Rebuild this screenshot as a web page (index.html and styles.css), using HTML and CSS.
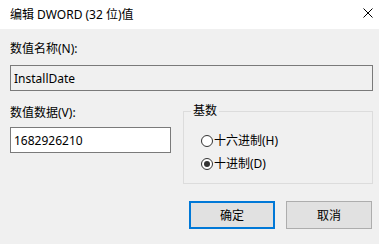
FILE: index.html
```html
<!DOCTYPE html>
<html lang="zh-CN">
<head>
<meta charset="utf-8">
<title>编辑 DWORD (32 位)值</title>
<link rel="stylesheet" href="styles.css">
</head>
<body>
<div class="dialog">
  <div class="titlebar">
    <span class="title">编辑 DWORD (32 位)值</span>
    <span class="close">
      <svg width="10" height="10" viewBox="0 0 10 10"><path d="M0.5 0.5 L9.5 9.5 M9.5 0.5 L0.5 9.5" stroke="#000" stroke-width="1" fill="none"/></svg>
    </span>
  </div>
  <div class="content">
    <div class="label">数值名称(N):</div>
    <input class="field field-readonly" type="text" value="InstallDate" readonly>
    <div class="row">
      <div class="col-left">
        <div class="label">数值数据(V):</div>
        <input class="field field-data" type="text" value="1682926210">
      </div>
      <fieldset class="group">
        <legend class="legend">基数</legend>
        <div class="radio-row"><span class="radio"></span><span class="radio-text">十六进制(H)</span></div>
        <div class="radio-row"><span class="radio checked"></span><span class="radio-text">十进制(D)</span></div>
      </fieldset>
    </div>
    <div class="buttons">
      <button class="btn btn-default">确定</button>
      <button class="btn">取消</button>
    </div>
  </div>
</div>
</body>
</html>
```

FILE: styles.css
```css
html, body {
  margin: 0;
  padding: 0;
  background: #f0f0f0;
}
body {
  width: 379px;
  height: 244px;
  overflow: hidden;
  font-family: "Noto Sans", "Noto Sans CJK SC", sans-serif;
  font-size: 12px;
  line-height: 16px;
  color: #000;
}
.dialog {
  width: 379px;
  height: 244px;
  display: flex;
  flex-direction: column;
}
.titlebar {
  height: 29px;
  background: #fff;
  display: flex;
  align-items: center;
  justify-content: space-between;
  padding-left: 10px;
  padding-right: 6px;
  box-sizing: border-box;
}
.title {
  line-height: 16px;
}
.close {
  display: flex;
  width: 10px;
  height: 10px;
  margin-top: -3px;
}
.content {
  padding: 12px 6px 0 10px;
  display: flex;
  flex-direction: column;
}
.label {
  line-height: 16px;
  height: 16px;
}
.field {
  display: block;
  box-sizing: border-box;
  height: 26px;
  margin: 8px 0 0 0;
  padding: 0 3px;
  border: 1px solid #7a7a7a;
  font-family: "Noto Sans", "Noto Sans CJK SC", sans-serif;
  font-size: 12px;
  color: #000;
  outline: none;
}
.field-readonly {
  width: 363px;
  background: #f0f0f0;
}
.field-data {
  width: 161px;
  margin-top: 6px;
  background: #fff;
}
.row {
  display: flex;
  align-items: flex-start;
  margin-top: 14px;
}
.col-left {
  width: 161px;
  display: flex;
  flex-direction: column;
}
.group {
  box-sizing: border-box;
  width: 190px;
  margin: -1px 0 0 12px;
  padding: 11px 0 8px 0;
  border: 1px solid #dcdcdc;
  min-width: 0;
}
.legend {
  margin-left: 7px;
  padding: 0 2px;
  line-height: 14px;
}
.radio-row {
  display: flex;
  align-items: center;
  height: 23px;
  padding-left: 17px;
}
.radio {
  box-sizing: border-box;
  width: 12px;
  height: 12px;
  border: 1px solid #333;
  border-radius: 50%;
  background: #fff;
  display: flex;
  align-items: center;
  justify-content: center;
}
.radio.checked::after {
  content: "";
  width: 6px;
  height: 6px;
  border-radius: 50%;
  background: #333;
}
.radio-text {
  margin-left: 1px;
}
.buttons {
  display: flex;
  justify-content: flex-end;
  gap: 11px;
  margin-top: 17px;
  padding-right: 1px;
}
.btn {
  box-sizing: border-box;
  width: 86px;
  height: 28px;
  background: #e1e1e1;
  border: 1px solid #adadad;
  font-family: "Noto Sans", "Noto Sans CJK SC", sans-serif;
  font-size: 12px;
  color: #000;
  padding: 0;
}
.btn-default {
  border: 2px solid #0078d7;
}
```
